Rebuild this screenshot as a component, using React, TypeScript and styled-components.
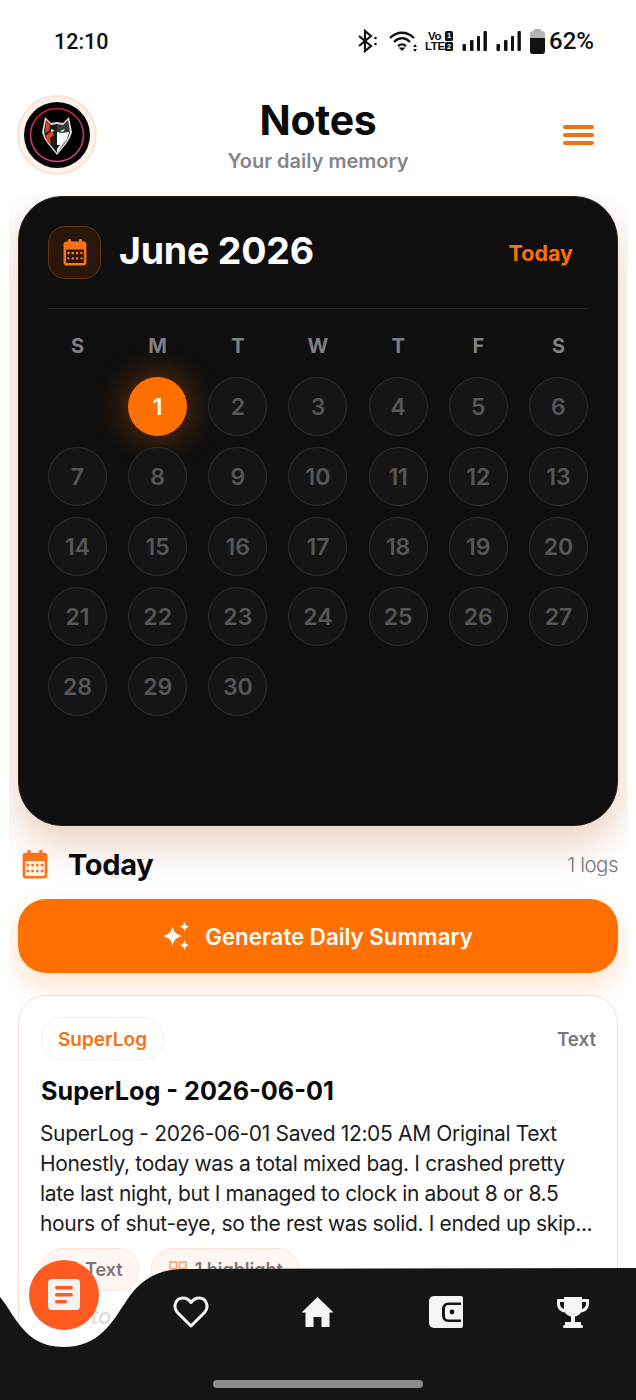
import React from "react";
import styled, { createGlobalStyle } from "styled-components";

const Global = createGlobalStyle`
  html, body { margin: 0; padding: 0; background: #fff; }
  * { box-sizing: border-box; }
  body { font-family: Inter, "Liberation Sans", sans-serif; }
`;

const Page = styled.div`
  position: relative;
  width: 636px;
  height: 1400px;
  overflow: hidden;
  background: #fff;
  display: flex;
  flex-direction: column;
`;

const StatusBar = styled.div`
  height: 82px;
  padding: 0 42px 0 54px;
  display: flex;
  align-items: center;
  justify-content: space-between;
  color: #111;
  font-family: Roboto, Inter, sans-serif;
  font-size: 21.5px;
  font-weight: 500;
`;
const StatusIcons = styled.div`
  display: flex;
  align-items: center;
  gap: 9px;
  font-size: 24px;
`;
const NetLabel = styled.div`
  display: grid;
  grid-template-columns: 19px 8px;
  column-gap: 1px;
  margin-left: -3px;
  font-family: "Liberation Sans", sans-serif;
  font-size: 11.5px;
  line-height: 10.5px;
  font-weight: 700;
  text-align: center;
`;
const NetWord = styled.span`
  display: block;
  letter-spacing: -0.4px;
`;
const SimBadge = styled.span`
  display: block;
  width: 8px;
  height: 9.5px;
  margin-top: 0.5px;
  border-radius: 1.5px;
  background: #111;
  color: #fff;
  font-size: 7.5px;
  line-height: 9.5px;
`;
const Battery = styled.span`
  margin-left: -5px;
`;
const BluetoothSlot = styled.span`
  display: flex;
  margin-right: 1px;
`;

const Header = styled.header`
  height: 113px;
  padding: 13px 17px 0;
  display: grid;
  grid-template-columns: 1fr auto 1fr;
  align-items: start;
`;
const Avatar = styled.div`
  width: 80px;
  height: 80px;
  border-radius: 50%;
  background: #fff2ea;
  border: 2px solid #fde3d4;
  padding: 5px;
`;
const HeaderText = styled.div`
  text-align: center;
`;
const Title = styled.div`
  font-size: 41px;
  line-height: 50px;
  font-weight: 700;
  color: #0a0a0a;
  letter-spacing: -0.3px;
`;
const Subtitle = styled.div`
  margin-top: 3px;
  font-size: 20px;
  line-height: 26px;
  font-weight: 600;
  color: #85858a;
`;
const Burger = styled.div`
  justify-self: end;
  width: 31px;
  margin: 30px 25px 0 0;
  display: flex;
  flex-direction: column;
  gap: 4.5px;
`;
const BurgerBar = styled.span`
  display: block;
  height: 3.5px;
  border-radius: 2px;
  background: #f47216;
`;

const Scroll = styled.main`
  flex: 1;
  margin: 0 8px 0 9px;
  padding: 1px 10px 0 9px;
  overflow: hidden;
`;

const Calendar = styled.section`
  height: 630px;
  border-radius: 44px;
  background: #0f0f0f;
  border: 1px solid #2c1c10;
  padding: 29px 29px 0;
  box-shadow: 0 18px 40px rgba(190, 110, 60, 0.33);
`;
const CalendarTop = styled.div`
  display: flex;
  align-items: center;
  height: 53px;
  padding-right: 15px;
`;
const IconBox = styled.div`
  width: 53px;
  height: 53px;
  border-radius: 17px;
  background: #2a1709;
  border: 1px solid #63350f;
  display: flex;
  align-items: center;
  justify-content: center;
`;
const Month = styled.div`
  flex: 1;
  margin: -5px 0 0 18px;
  color: #fff;
  font-size: 37.5px;
  font-weight: 700;
  letter-spacing: -0.2px;
`;
const TodayLink = styled.div`
  color: #ff7000;
  font-size: 21.5px;
  font-weight: 700;
`;
const Divider = styled.div`
  height: 1px;
  background: #2b2b2b;
  margin-top: 29px;
`;
const Week = styled.div`
  display: grid;
  grid-template-columns: repeat(7, 59px);
  justify-content: space-between;
  margin-top: 24px;
  margin-bottom: 18px;
`;
const WeekDay = styled.div`
  text-align: center;
  color: #808080;
  font-size: 20px;
  line-height: 26px;
  font-weight: 700;
`;
const Days = styled.div`
  display: grid;
  grid-template-columns: repeat(7, 59px);
  justify-content: space-between;
  row-gap: 11px;
`;
const Day = styled.div<{ $active?: boolean; $blank?: boolean }>`
  height: 59px;
  border-radius: 50%;
  display: flex;
  align-items: center;
  justify-content: center;
  font-size: 23px;
  font-weight: 600;
  color: ${(p) => (p.$active ? "#fff" : "#565656")};
  background: ${(p) => (p.$active ? "#ff7000" : p.$blank ? "transparent" : "#151515")};
  border: ${(p) => (p.$blank || p.$active ? "none" : "1.5px solid #303030")};
  box-shadow: ${(p) => (p.$active ? "0 0 34px rgba(255, 112, 0, 0.45)" : "none")};
`;

const SectionHead = styled.div`
  display: flex;
  align-items: center;
  height: 73px;
  padding: 4px 0 0 4px;
`;
const SectionTitle = styled.div`
  flex: 1;
  margin-left: 20px;
  font-size: 29px;
  font-weight: 700;
  color: #0a0a0a;
  letter-spacing: -0.3px;
`;
const LogCount = styled.div`
  font-size: 20.5px;
  font-weight: 300;
  color: #77777a;
  letter-spacing: -0.5px;
`;

const SummaryButton = styled.div`
  height: 74px;
  border-radius: 28px;
  background: #ff7000;
  color: #fff;
  display: flex;
  align-items: center;
  justify-content: center;
  gap: 15px;
  font-size: 22.3px;
  font-weight: 600;
  box-shadow: 0 12px 28px rgba(255, 112, 0, 0.22);
`;

const LogCard = styled.article`
  margin-top: 22px;
  border-radius: 28px;
  background: #fff;
  border: 1.5px solid #fbd9cc;
  padding: 21px 21px 21px 22px;
`;
const CardTop = styled.div`
  display: flex;
  align-items: center;
  justify-content: space-between;
`;
const TypePill = styled.div`
  height: 43px;
  width: 123px;
  padding-top: 1px;
  border-radius: 22px;
  border: 1.5px solid #eeeeee;
  display: flex;
  align-items: center;
  justify-content: center;
  color: #f47216;
  font-size: 19px;
  font-weight: 600;
`;
const TypeLabel = styled.div`
  padding-top: 2px;
  color: #77777a;
  font-size: 18.7px;
  font-weight: 600;
`;
const CardTitle = styled.h2`
  margin: 13px 0 0;
  font-size: 25.2px;
  line-height: 36px;
  font-weight: 700;
  color: #0a0a0a;
`;
const CardBody = styled.p`
  margin: 10px 0 0 -1px;
  font-size: 21px;
  line-height: 30px;
  font-weight: 400;
  color: #1c1c1c;
  letter-spacing: -0.35px;
`;
const Chips = styled.div`
  display: flex;
  gap: 12px;
  margin-top: 9px;
`;
const Chip = styled.div`
  height: 43px;
  border-radius: 22px;
  background: #fff6f1;
  border: 1.5px solid #fde2d5;
  display: flex;
  align-items: center;
  gap: 8px;
  padding: 0 15px 0 17px;
  color: #77777a;
  font-size: 18px;
  font-weight: 600;
`;
const Hint = styled.div`
  margin-top: 12px;
  padding-left: 4px;
  color: #dcdcdc;
  font-size: 22px;
  font-style: italic;
  font-weight: 500;
`;

const BottomNav = styled.nav`
  position: absolute;
  left: 0;
  right: 0;
  bottom: 0;
  height: 132px;
`;
const NavShape = styled.svg`
  position: absolute;
  inset: 0;
  display: block;
`;
const NavIcons = styled.div`
  position: relative;
  display: grid;
  grid-template-columns: 127px 127px 129px 126px;
  padding: 28px 0 0 127px;
  justify-items: center;
`;
const Fab = styled.div`
  position: absolute;
  left: 29px;
  top: -8px;
  width: 70px;
  height: 70px;
  border-radius: 50%;
  background: #ff5a1f;
  display: flex;
  align-items: center;
  justify-content: center;
`;
const HomeBar = styled.div`
  position: absolute;
  left: 213px;
  bottom: 12px;
  width: 210px;
  height: 8px;
  border-radius: 4px;
  background: #8e8e8e;
`;

const CalIcon = ({ size, inner }: { size: number; inner: string }) => (
  <svg width={size} height={size * 1.12} viewBox="0 0 24 27" aria-hidden="true">
    <rect x="5" y="0" width="3" height="5" rx="1.2" fill="#f9731c" />
    <rect x="16" y="0" width="3" height="5" rx="1.2" fill="#f9731c" />
    <rect x="0.5" y="2.5" width="23" height="24" rx="3" fill="#f9731c" />
    <rect x="3" y="10.5" width="18" height="13.5" rx="1.2" fill={inner} />
    {[5.4, 9.8, 14.2, 18.6].map((x) =>
      [14, 19.5].map((y) => <rect key={`${x}-${y}`} x={x - 1.2} y={y - 1.2} width="2.4" height="2.4" rx="0.5" fill="#f9731c" />)
    )}
  </svg>
);

const Wolf = () => (
  <svg width="66" height="66" viewBox="0 0 66 66" aria-hidden="true">
    <defs>
      <linearGradient id="ring" x1="0" y1="0" x2="0" y2="1">
        <stop offset="0" stopColor="#c0203c" />
        <stop offset="1" stopColor="#d6468f" />
      </linearGradient>
    </defs>
    <circle cx="33" cy="33" r="33" fill="#000" />
    <circle cx="33" cy="33" r="26.5" fill="none" stroke="url(#ring)" strokeWidth="1.6" />
    <polygon points="21,15 27,21 33,20 39,21 45,15 48,30 46,36 42,42 33,53 24,42 20,36 18,30" fill="#dcdcdc" />
    <polygon points="22,18 27,23 33,22 33,51 25,41 21,35 20,29" fill="#1b1b1b" />
    <polygon points="33,22 39,23 44,18 46,30 44,36 40,42 33,51" fill="#3a3a3a" />
    <polygon points="33,30 38,31 45,30 43,37 39,42 33,51" fill="#f8f8f8" />
    <polygon points="22,19 26,23 25,29 21,31" fill="#e0451c" />
    <polygon points="21,34 28,29 30,33 26,36 27,42 24,40" fill="#e0451c" />
    <polygon points="27,27 31,29 27,30" fill="#e8e8e8" />
    <polygon points="36,29 41,27 39,30" fill="#e8e8e8" />
    <polygon points="30,43 36,43 33,47" fill="#111" />
  </svg>
);

const Sparkles = () => (
  <svg width="27" height="28" viewBox="0 0 27 28" aria-hidden="true" fill="#fff">
    <path d="M9.5 4.5 C10.5 9.5 12.5 12 19 14 C12.5 16 10.5 18.5 9.5 24 C8.5 18.5 6.5 16 0 14 C6.5 12 8.5 9.5 9.5 4.5Z" />
    <path d="M21.5 0 C22 2.8 23.4 4.2 26.5 4.7 C23.4 5.2 22 6.6 21.5 9.4 C21 6.6 19.6 5.2 16.5 4.7 C19.6 4.2 21 2.8 21.5 0Z" />
    <path d="M21.5 18.6 C22 21.4 23.4 22.8 26.5 23.3 C23.4 23.8 22 25.2 21.5 28 C21 25.2 19.6 23.8 16.5 23.3 C19.6 22.8 21 21.4 21.5 18.6Z" />
  </svg>
);

const HeartIcon = () => (
  <svg width="36" height="32" viewBox="0 0 36 32" fill="none" stroke="#f5f5f5" strokeWidth="3" strokeLinejoin="round" aria-hidden="true">
    <path d="M18 30 L4.5 16.5 C-0.5 11 2.5 2 10 2 C13.5 2 16 3.8 18 6.5 C20 3.8 22.5 2 26 2 C33.5 2 36.5 11 31.5 16.5 Z" />
  </svg>
);
const HomeIcon = () => (
  <svg width="33" height="32" viewBox="0 0 33 32" fill="#f5f5f5" aria-hidden="true">
    <path d="M16.5 1 L32.5 16.5 L28.5 16.5 L28.5 31 L20.5 31 L20.5 21 L12.5 21 L12.5 31 L4.5 31 L4.5 16.5 L0.5 16.5 Z" />
  </svg>
);
const WalletIcon = () => (
  <svg width="34" height="32" viewBox="0 0 34 32" aria-hidden="true">
    <path d="M5 0 H32 a2 2 0 0 1 2 2 V30 a2 2 0 0 1 -2 2 H5 a5 5 0 0 1 -5 -5 V5 a5 5 0 0 1 5 -5 Z" fill="#f5f5f5" />
    <path d="M32 6.5 H19 a6 6 0 0 0 -6 6 V20 a6 6 0 0 0 6 6 H32 V23.5 H19.5 a3.5 3.5 0 0 1 -3.5 -3.5 V12.5 a3.5 3.5 0 0 1 3.5 -3.5 H32 Z" fill="#151515" />
    <circle cx="23" cy="16" r="2.4" fill="#151515" />
  </svg>
);
const TrophyIcon = () => (
  <svg width="32" height="32" viewBox="0 0 32 32" aria-hidden="true">
    <path d="M7 1 H25 V3 H31 a1 1 0 0 1 1 1 V8 C32 13 28 16 24 16.5 C22.8 18.5 20.5 20 18 20.5 V26 H24 V29 H8 V26 H14 V20.5 C11.5 20 9.2 18.5 8 16.5 C4 16 0 13 0 8 V4 a1 1 0 0 1 1 -1 H7 Z" fill="#f5f5f5" />
    <rect x="6" y="29" width="20" height="3" rx="1.5" fill="#f5f5f5" />
    <path d="M3 6 H7 V13 C4.8 12.3 3 10.5 3 8 Z M29 6 H25 V13 C27.2 12.3 29 10.5 29 8 Z" fill="#151515" />
  </svg>
);

const DocIcon = () => (
  <svg width="32" height="32" viewBox="0 0 32 32" aria-hidden="true">
    <rect x="0" y="0" width="32" height="31" rx="4" fill="#f5f3f1" />
    <rect x="7" y="7" width="18" height="3.4" rx="1.7" fill="#ff5a1f" />
    <rect x="7" y="14" width="18" height="3.4" rx="1.7" fill="#ff5a1f" />
    <rect x="7" y="21" width="12" height="3.4" rx="1.7" fill="#ff5a1f" />
  </svg>
);

const Highlight = () => (
  <svg width="18" height="18" viewBox="0 0 18 18" fill="none" stroke="#f9a76c" strokeWidth="1.6" aria-hidden="true">
    <rect x="1" y="1" width="6.5" height="6.5" />
    <rect x="10.5" y="1" width="6.5" height="6.5" />
    <rect x="1" y="10.5" width="6.5" height="6.5" />
    <rect x="10.5" y="10.5" width="6.5" height="6.5" />
  </svg>
);

const SignalIcon = () => (
  <svg width="25" height="22" viewBox="0 0 25 22" fill="#111" aria-hidden="true">
    <rect x="0.5" y="14" width="3.5" height="7" rx="1" />
    <rect x="8" y="10" width="3.5" height="11" rx="1" />
    <rect x="15" y="6" width="3" height="15" rx="1" />
    <rect x="21.5" y="1" width="3.4" height="20" rx="1" />
  </svg>
);

const Status = () => (
  <StatusIcons>
    <BluetoothSlot>
      <svg width="22" height="24" viewBox="0 0 22 24" fill="none" stroke="#111" strokeWidth="2.2" aria-hidden="true">
        <path d="M2 7 L14 17 L8 22 V2 L14 7 L2 17" />
        <circle cx="18.5" cy="9" r="1.3" fill="#111" stroke="none" />
        <circle cx="18.5" cy="15" r="1.3" fill="#111" stroke="none" />
      </svg>
    </BluetoothSlot>
    <svg width="30" height="24" viewBox="0 0 30 24" fill="none" stroke="#111" strokeWidth="2.3" aria-hidden="true">
      <path d="M1 9 C8 2 18 2 25 9" />
      <path d="M5 13 C10 8 16 8 21 13" />
      <path d="M9 17 C11.5 15 14.5 15 17 17" />
      <path d="M13 22 L9.5 18.5 H16.5 Z" fill="#111" stroke="none" />
      <path d="M26 15 L28 18 H24 Z M26 23 L28 20 H24 Z" fill="#111" stroke="none" />
    </svg>
    <NetLabel>
      <NetWord>Vo</NetWord>
      <SimBadge>1</SimBadge>
      <NetWord>LTE</NetWord>
      <SimBadge>2</SimBadge>
    </NetLabel>
    <SignalIcon />
    <SignalIcon />
    <svg width="15" height="25" viewBox="0 0 15 25" aria-hidden="true">
      <rect x="4" y="0" width="7" height="3" rx="1" fill="#aaa" />
      <rect x="0" y="2" width="15" height="23" rx="3" fill="#b5b5b5" />
      <path d="M0 9 H15 V22 a3 3 0 0 1 -3 3 H3 a3 3 0 0 1 -3 -3 Z" fill="#111" />
    </svg>
    <Battery>62%</Battery>
  </StatusIcons>
);

const weekDays = ["S", "M", "T", "W", "T", "F", "S"];
const dates = Array.from({ length: 30 }, (_, i) => i + 1);

export default function App() {
  return (
    <Page>
      <Global />
      <StatusBar>
        <span>12:10</span>
        <Status />
      </StatusBar>
      <Header>
        <Avatar>
          <Wolf />
        </Avatar>
        <HeaderText>
          <Title>Notes</Title>
          <Subtitle>Your daily memory</Subtitle>
        </HeaderText>
        <Burger>
          <BurgerBar />
          <BurgerBar />
          <BurgerBar />
        </Burger>
      </Header>
      <Scroll>
        <Calendar>
          <CalendarTop>
            <IconBox>
              <CalIcon size={24} inner="#2a1709" />
            </IconBox>
            <Month>June 2026</Month>
            <TodayLink>Today</TodayLink>
          </CalendarTop>
          <Divider />
          <Week>
            {weekDays.map((d, i) => (
              <WeekDay key={i}>{d}</WeekDay>
            ))}
          </Week>
          <Days>
            <Day $blank />
            {dates.map((d) => (
              <Day key={d} $active={d === 1}>
                {d}
              </Day>
            ))}
          </Days>
        </Calendar>
        <SectionHead>
          <CalIcon size={26} inner="#fff3ea" />
          <SectionTitle>Today</SectionTitle>
          <LogCount>1 logs</LogCount>
        </SectionHead>
        <SummaryButton>
          <Sparkles />
          Generate Daily Summary
        </SummaryButton>
        <LogCard>
          <CardTop>
            <TypePill>SuperLog</TypePill>
            <TypeLabel>Text</TypeLabel>
          </CardTop>
          <CardTitle>SuperLog - 2026-06-01</CardTitle>
          <CardBody>
            SuperLog - 2026-06-01 Saved 12:05 AM Original Text Honestly, today was a total mixed bag. I crashed pretty late last night, but I managed to clock in about 8 or 8.5 hours of shut-eye, so the rest was solid. I ended up skip...
          </CardBody>
          <Chips>
            <Chip>
              <Highlight />
              Text
            </Chip>
            <Chip>
              <Highlight />1 highlight
            </Chip>
          </Chips>
          <Hint>Tap to view</Hint>
        </LogCard>
      </Scroll>
      <BottomNav>
        <NavShape width="636" height="132" viewBox="0 0 636 132" aria-hidden="true">
          <path
            d="M0 29 C14 45 24 79 63 79 C100 79 112 54 127 32 C140 12 158 1 183 1 L636 0 L636 132 L0 132 Z"
            fill="#151515"
          />
        </NavShape>
        <Fab>
          <DocIcon />
        </Fab>
        <NavIcons>
          <HeartIcon />
          <HomeIcon />
          <WalletIcon />
          <TrophyIcon />
        </NavIcons>
        <HomeBar />
      </BottomNav>
    </Page>
  );
}
